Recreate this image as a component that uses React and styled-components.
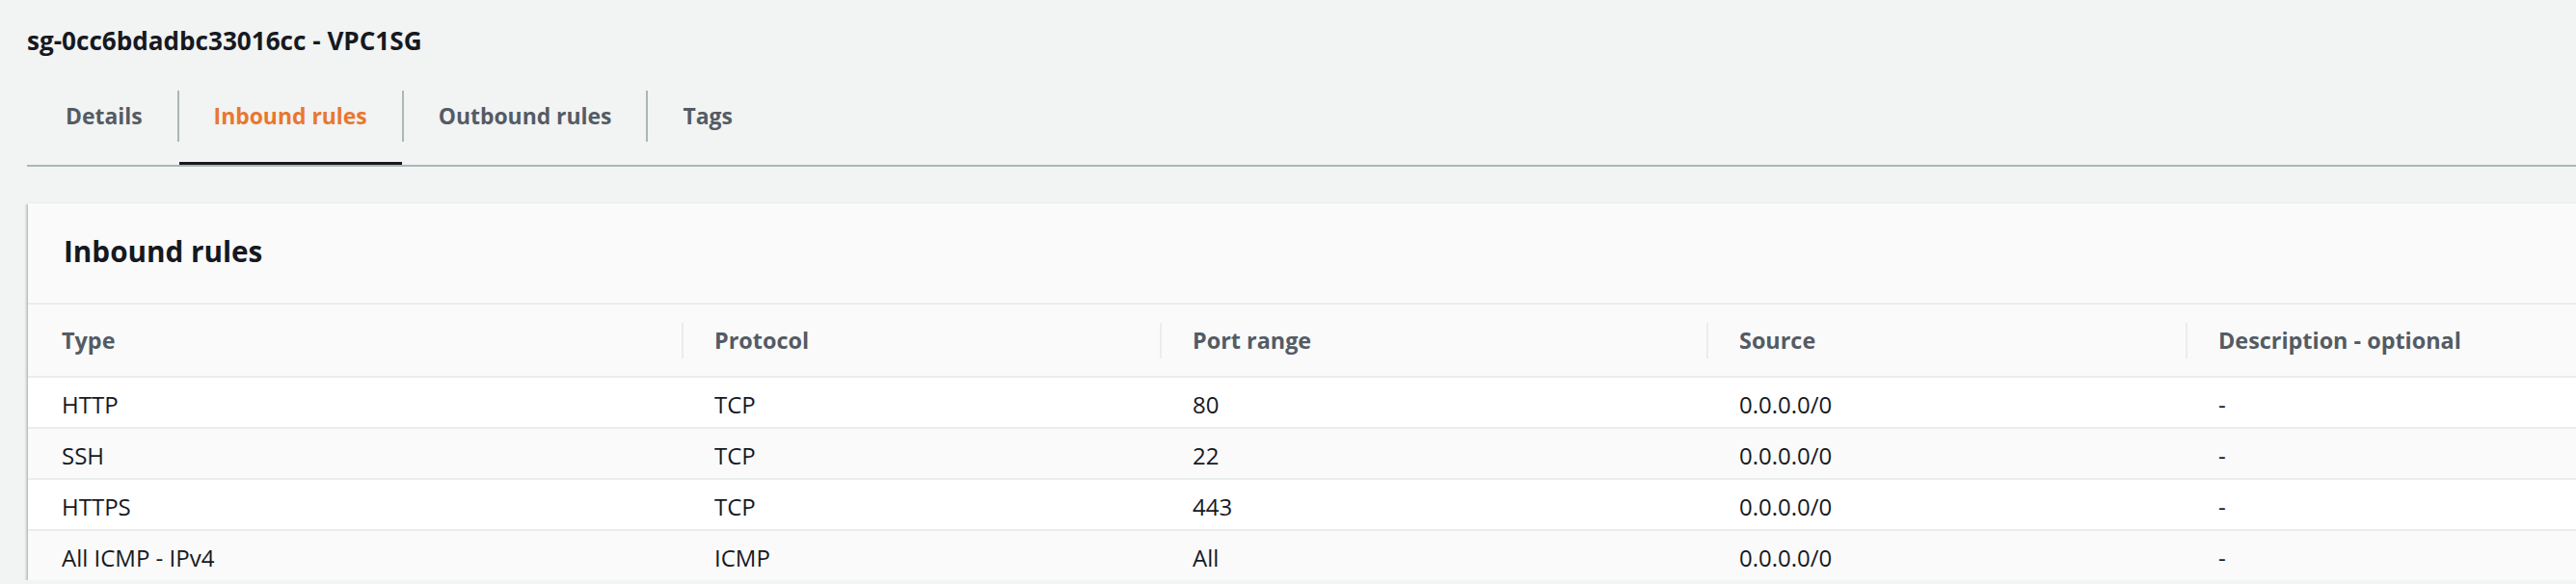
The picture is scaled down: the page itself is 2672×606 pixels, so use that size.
import React from "react";
import styled, { createGlobalStyle } from "styled-components";

const GlobalStyle = createGlobalStyle`
  html, body {
    margin: 0;
    padding: 0;
    background: #f2f3f3;
    overflow: hidden;
  }
  body {
    font-family: "Open Sans", "Noto Sans", sans-serif;
    color: #16191f;
  }
`;

const tabs = ["Details", "Inbound rules", "Outbound rules", "Tags"];

const columns = [
  { label: "Type", width: "678px" },
  { label: "Protocol", width: "496px" },
  { label: "Port range", width: "567px" },
  { label: "Source", width: "497px" },
  { label: "Description - optional", width: "1fr" },
];

const rules = [
  ["HTTP", "TCP", "80", "0.0.0.0/0", "-"],
  ["SSH", "TCP", "22", "0.0.0.0/0", "-"],
  ["HTTPS", "TCP", "443", "0.0.0.0/0", "-"],
  ["All ICMP - IPv4", "ICMP", "All", "0.0.0.0/0", "-"],
];

const gridTemplate = columns.map((c) => c.width).join(" ");

const App = () => {
  const activeTab = "Inbound rules";

  return (
    <>
      <GlobalStyle />
      <Page>
        <Title>sg-0cc6bdadbc33016cc - VPC1SG</Title>
        <TabList>
          {tabs.map((tab, i) => (
            <Tab key={tab}>
              <TabLabel $first={i === 0} $active={tab === activeTab}>
                {tab}
              </TabLabel>
              <TabIndicator $first={i === 0} $active={tab === activeTab} />
            </Tab>
          ))}
        </TabList>

        <Card>
          <CardHeader>
            <CardTitle>Inbound rules</CardTitle>
          </CardHeader>
          <HeadRow>
            {columns.map((col, i) => (
              <HeadCell key={col.label} $first={i === 0}>
                {col.label}
              </HeadCell>
            ))}
          </HeadRow>
          {rules.map((row, r) => (
            <BodyRow key={row[0]} $striped={r % 2 === 1} $last={r === rules.length - 1}>
              {row.map((value, i) => (
                <BodyCell key={i} $first={i === 0}>
                  {value}
                </BodyCell>
              ))}
            </BodyRow>
          ))}
        </Card>
      </Page>
    </>
  );
};

export default App;

const Page = styled.div`
  padding: 26px 0 0 28px;
`;

const Title = styled.h1`
  margin: 0 0 36px;
  font-size: 26.1px;
  line-height: 32px;
  font-weight: 700;
  color: #16191f;
`;

const TabList = styled.div`
  display: flex;
  padding-left: 2px;
  border-bottom: 2px solid #aab7b8;
`;

const Tab = styled.div`
  display: flex;
  flex-direction: column;
`;

const TabLabel = styled.span`
  height: 53px;
  display: flex;
  align-items: center;
  padding: 0 36px;
  border-left: 2px solid ${(p) => (p.$first ? "transparent" : "#aab7b8")};
  font-size: 22.9px;
  font-weight: 700;
  color: ${(p) => (p.$active ? "#e8772e" : "#545b64")};
`;

const TabIndicator = styled.span`
  height: 3px;
  margin: 21px 0 0 2px;
  background: ${(p) => (p.$active ? "#16191f" : "transparent")};
`;

const Card = styled.section`
  margin: 37px -12px 0 1px;
  background: #fff;
  border-top: 1px solid #eaeded;
  box-shadow: 0 2px 1px 0 rgba(0, 28, 36, 0.35),
    2px 2px 2px 0 rgba(0, 28, 36, 0.15), -2px 2px 2px 0 rgba(0, 28, 36, 0.2);
`;

const CardHeader = styled.div`
  padding: 32px 37px 35px;
  background: #fafafa;
  border-bottom: 2px solid #eaeded;
`;

const CardTitle = styled.h2`
  margin: 0;
  font-size: 29.7px;
  line-height: 36px;
  font-weight: 700;
  color: #16191f;
`;

const HeadRow = styled.div`
  display: grid;
  grid-template-columns: ${gridTemplate};
  height: 74px;
  background: #fafafa;
  border-bottom: 2px solid #eaeded;
`;

const HeadCell = styled.div`
  display: flex;
  align-items: center;
  padding-left: ${(p) => (p.$first ? "35px" : "0")};
  font-size: 23.4px;
  font-weight: 700;
  color: #545b64;
  white-space: nowrap;

  &::before {
    content: "";
    display: ${(p) => (p.$first ? "none" : "block")};
    width: 2px;
    height: 37px;
    margin-right: 32px;
    background: #eaeded;
  }
`;

const BodyRow = styled.div`
  display: grid;
  grid-template-columns: ${gridTemplate};
  height: 51px;
  background: ${(p) => (p.$striped ? "#fafafa" : "#ffffff")};
  border-bottom: ${(p) => (p.$last ? "none" : "2px solid #eaeded")};
`;

const BodyCell = styled.div`
  display: flex;
  align-items: center;
  padding: 3px 0 0 ${(p) => (p.$first ? "35px" : "34px")};
  font-size: 24px;
  color: #16191f;
  white-space: nowrap;
`;
